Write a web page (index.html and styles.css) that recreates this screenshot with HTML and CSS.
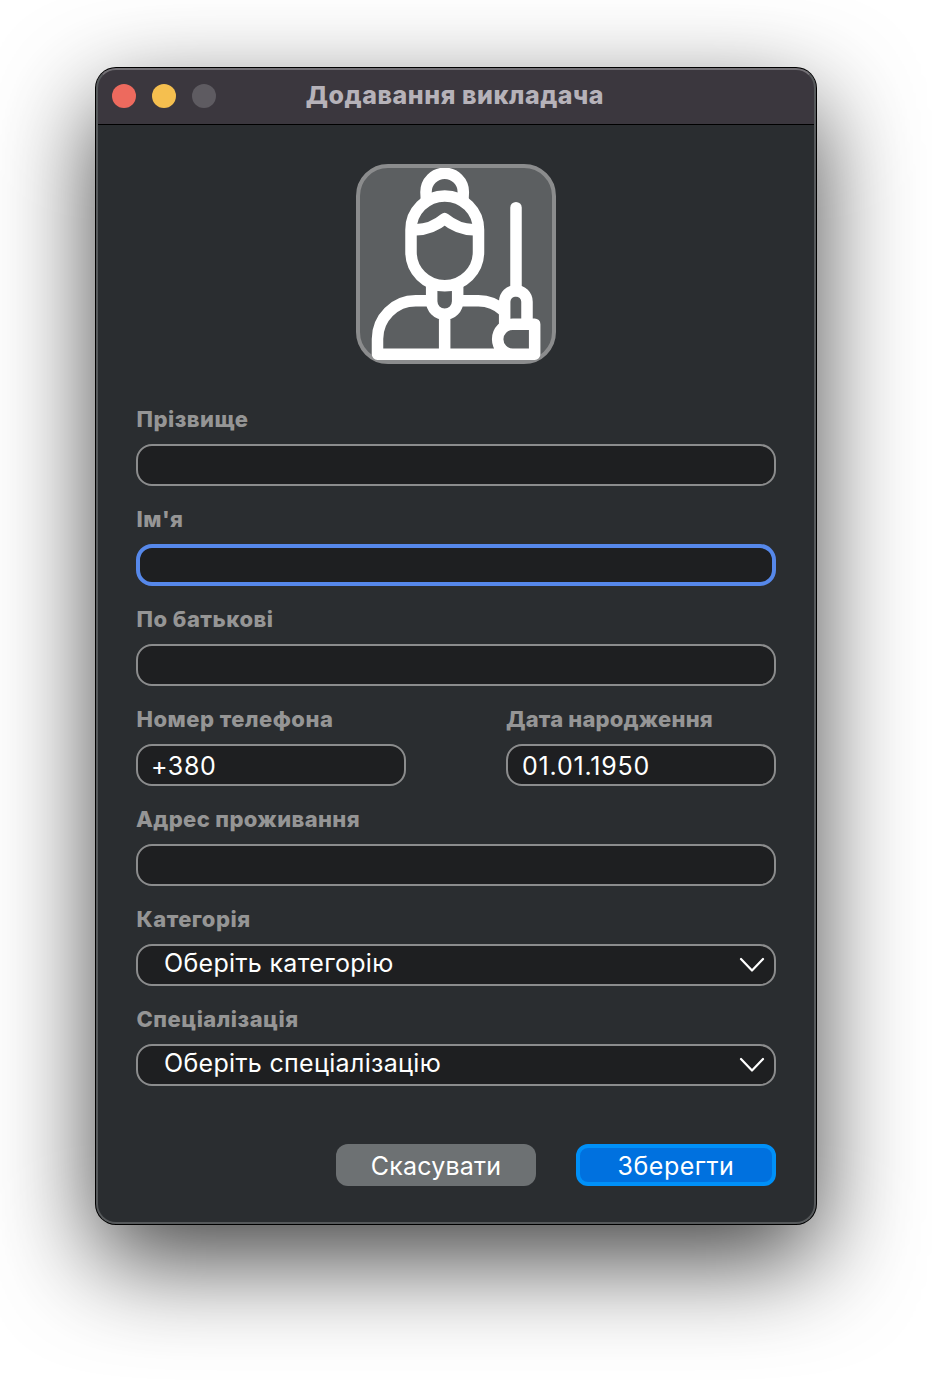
FILE: index.html
```html
<!DOCTYPE html>
<html lang="uk">
<head>
<meta charset="utf-8">
<title>Додавання викладача</title>
<link rel="stylesheet" href="styles.css">
</head>
<body>
<main class="window">
  <header class="titlebar">
    <div class="lights"><span class="light close"></span><span class="light minimize"></span><span class="light zoom"></span></div>
    <h1 class="title">Додавання викладача</h1>
  </header>
  <form class="form">
    <button type="button" class="avatar" aria-label="Фото">
      <svg viewBox="42 42 576 576" fill="none" stroke="#fff" stroke-width="34.5" stroke-linejoin="round">
        <path d="M241 134L240 114A55.500 55.500 0 0 1 352 114L351 134"/>
        <path d="M195 227A101 101 0 0 1 397.500 227V294A101 101 0 0 1 195 294Z"/>
        <path d="M205 227Q254 229 296 194Q338 229 388 227"/>
        <path d="M257 395V442A39 39 0 0 0 335 442V395M296 480V600"/>
        <path d="M257 440.500H209A114.500 114.500 0 0 0 94.500 555V600.500H566V510.500H500A45 45 0 0 0 500 600.500"/>
        <path d="M335 440.500H397A114.500 114.500 0 0 1 474 471"/>
        <path d="M476 510V443.500A33.500 33.500 0 0 1 543 443.500V510"/>
        <path d="M510 161V410" stroke-linecap="round"/>
      </svg>
    </button>
    <div class="fields">
      <div class="field"><label class="label">Прізвище</label><div class="input"></div></div>
      <div class="field"><label class="label">Ім'я</label><div class="input focused"></div></div>
      <div class="field"><label class="label">По батькові</label><div class="input"></div></div>
      <div class="row">
        <div class="field"><label class="label">Номер телефона</label><div class="input phone">+380</div></div>
        <div class="field"><label class="label birth">Дата народження</label><div class="input date">01.01.1950</div></div>
      </div>
      <div class="field"><label class="label address">Адрес проживання</label><div class="input"></div></div>
      <div class="field"><label class="label">Категорія</label>
        <div class="input select"><span>Оберіть категорію</span><svg class="chevron" viewBox="0 0 26 16"><path d="M2 2L13 13.500L24 2"/></svg></div></div>
      <div class="field"><label class="label">Спеціалізація</label>
        <div class="input select"><span>Оберіть спеціалізацію</span><svg class="chevron" viewBox="0 0 26 16"><path d="M2 2L13 13.500L24 2"/></svg></div></div>
    </div>
    <div class="actions">
      <button type="button" class="btn">Скасувати</button>
      <button type="button" class="btn primary">Зберегти</button>
    </div>
  </form>
</main>
</body>
</html>
```
FILE: styles.css
```css
* { box-sizing: border-box; }
body {
  margin: 0;
  height: 1400px;
  padding: 68px 0 0 96px;
  overflow: hidden;
  background: #fff;
  font-family: Inter, "Liberation Sans", sans-serif;
}
.window {
  position: relative;
  width: 720px;
  height: 1156px;
  border-radius: 20px;
  overflow: hidden;
  background: #2a2d30;
  box-shadow: 0 0 0 1px #000, 0 36px 100px rgba(0, 0, 0, .74);
}
/* light rim drawn over the title bar and content */
.window::after {
  content: "";
  position: absolute;
  inset: 0;
  border: 2px solid #56595b;
  border-top-color: #737075;
  border-radius: 20px;
  pointer-events: none;
}
.titlebar {
  display: grid;
  grid-template-columns: 1fr auto 1fr;
  align-items: center;
  height: 57px;
  padding: 0 18px 3px 16px;
  background: #3b373e;
  border-bottom: 1px solid #000;
}
.lights { display: flex; gap: 16px; padding-top: 2px; }
.light { width: 24px; height: 24px; border-radius: 50%; }
.close { background: #ed6a5e; }
.minimize { background: #f5bf4f; }
.zoom { background: #5e5b61; }
.title {
  margin: 0;
  font-size: 25px;
  font-weight: 800;
  line-height: 30px;
  letter-spacing: .54px;
  color: #b6b2b9;
}
.form {
  display: flex;
  flex-direction: column;
  padding: 39px 40px 0;
}
.avatar {
  align-self: center;
  width: 200px;
  height: 200px;
  padding: 0;
  border: 4px solid #8b8c8d;
  border-radius: 32px;
  background: #5c5f61;
}
.avatar svg { display: block; width: 192px; height: 192px; }
.fields {
  display: flex;
  flex-direction: column;
  gap: 18px;
  margin-top: 40px;
}
.field { display: flex; flex-direction: column; }
.row { display: grid; grid-template-columns: 270px 270px; justify-content: space-between; }
.label {
  height: 40px;
  padding-left: .5px;
  line-height: 31px;
  font-size: 22px;
  font-weight: 800;
  letter-spacing: .48px;
  white-space: nowrap;
  color: #959595;
}
.birth { padding-left: 0; letter-spacing: .18px; }
.address { padding-left: 0; letter-spacing: .36px; }
.input {
  height: 42px;
  padding: 0 13px;
  border: 2px solid #8b8c8d;
  border-radius: 16px;
  background: #1e1f21;
  font-size: 25px;
  line-height: 40px;
  color: #fff;
}
.phone { padding-left: 13px; letter-spacing: .6px; }
.date { padding-left: 14px; letter-spacing: .8px; }
.focused { border: 4px solid #5688ea; }
.select {
  display: flex;
  align-items: flex-start;
  justify-content: space-between;
  padding: 0 9px 0 26px;
  line-height: 35px;
  letter-spacing: .32px;
}
.chevron {
  width: 26px;
  height: 16px;
  margin-top: 11px;
  fill: none;
  stroke: #fff;
  stroke-width: 2.2;
  stroke-linecap: round;
  stroke-linejoin: round;
}
.actions {
  display: flex;
  justify-content: flex-end;
  gap: 40px;
  margin-top: 58px;
}
.btn {
  width: 200px;
  height: 42px;
  padding: 2px 0 0;
  border: 0;
  border-radius: 12px;
  background: #6d7173;
  font: 400 25px/40px Inter, "Liberation Sans", sans-serif;
  letter-spacing: .2px;
  color: #fff;
}
.primary {
  padding: 2px 0 0;
  border: 4px solid #0090f8;
  background: #0071df;
  line-height: 32px;
  letter-spacing: .5px;
}
```
